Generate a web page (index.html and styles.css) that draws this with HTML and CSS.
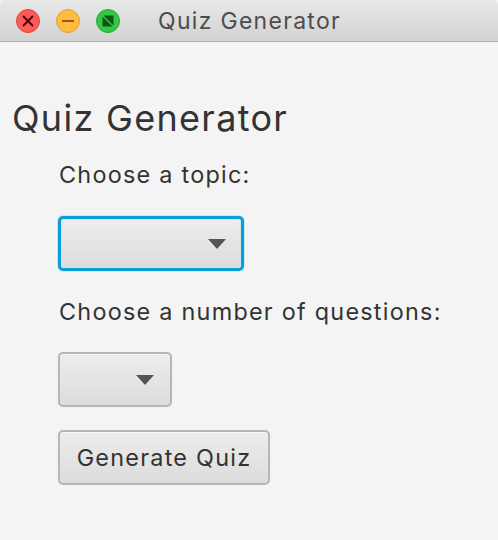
FILE: index.html
```html
<!DOCTYPE html>
<html>
<head>
<meta charset="utf-8">
<link rel="stylesheet" href="styles.css">
</head>
<body>
<div class="window">
  <div class="titlebar">
    <div class="lights">
      <svg class="light" viewBox="0 0 24 24"><circle cx="12" cy="12" r="11.5" fill="#fc5b57" stroke="#e0443e"/><path d="M7.5 7.5 L16.5 16.5 M16.5 7.5 L7.5 16.5" stroke="#4c0002" stroke-width="1.8" stroke-linecap="round"/></svg>
      <svg class="light" viewBox="0 0 24 24"><circle cx="12" cy="12" r="11.5" fill="#fdbb3f" stroke="#dea236"/><path d="M6 12 H18" stroke="#985712" stroke-width="2"/></svg>
      <svg class="light" viewBox="0 0 24 24"><circle cx="12" cy="12" r="11.5" fill="#33c748" stroke="#27a83b"/><path d="M7.5 6.5 H17.5 V16.5 Z" fill="#0b5a10"/><path d="M6.5 7.5 V17.5 H16.5 Z" fill="#0b5a10"/></svg>
    </div>
    <div class="title">Quiz Generator</div>
  </div>
  <div class="content">
    <h1 class="heading">Quiz Generator</h1>
    <div class="form">
      <div class="label label-first">Choose a topic:</div>
      <div class="combo combo-wide focused"><span class="arrow"></span></div>
      <div class="label label-second">Choose a number of questions:</div>
      <div class="combo combo-narrow"><span class="arrow"></span></div>
      <div class="button">Generate Quiz</div>
    </div>
  </div>
</div>
</body>
</html>
```
FILE: styles.css
```css
html, body {
  margin: 0;
  padding: 0;
  background: #f4f4f4;
}
body {
  font-family: Inter, "Noto Sans", "Liberation Sans", sans-serif;
  color: #333333;
}
.window {
  width: 498px;
  height: 540px;
  background: #f4f4f4;
  border-radius: 5px 5px 0 0;
  overflow: hidden;
}
.titlebar {
  height: 41px;
  border-bottom: 1px solid #afafaf;
  background: linear-gradient(#e8e8e8, #d2d2d2);
  display: flex;
  align-items: center;
}
.lights {
  display: flex;
  gap: 16px;
  padding-left: 16px;
}
.light {
  width: 24px;
  height: 24px;
  display: block;
}
.title {
  margin-left: 38px;
  font-size: 23px;
  letter-spacing: 1.3px;
  color: #4d4d4d;
  line-height: 26px;
}
.content {
  padding-left: 12px;
}
.heading {
  margin: 57px 0 0 0;
  font-size: 36px;
  letter-spacing: 1.3px;
  font-weight: 400;
  line-height: 38px;
  color: #333333;
}
.form {
  padding-left: 47px;
  display: flex;
  flex-direction: column;
  align-items: flex-start;
}
.label {
  font-size: 23.4px;
  letter-spacing: 1.25px;
  line-height: 26px;
  color: #333333;
}
.label-first { margin-top: 25px; }
.label-second { margin-top: 28px; }
.combo {
  position: relative;
  box-sizing: border-box;
  height: 55px;
  border: 2px solid #b6b6b6;
  border-radius: 5px;
  background: linear-gradient(#ededed, #dcdcdc);
  box-shadow: inset 0 1px 0 #f7f7f7;
}
.combo-wide {
  width: 186px;
  margin-top: 28px;
  margin-left: -1px;
}
.combo-narrow {
  width: 114px;
  margin-top: 27px;
  margin-left: -1px;
}
.focused {
  border: 3px solid #0a9ed9;
  box-shadow: 0 0 0 1px #cfe7f2, inset 0 0 0 1px #d2e6ee;
}
.arrow {
  position: absolute;
  right: 16px;
  top: 50%;
  margin-top: -5px;
  width: 0;
  height: 0;
  border-left: 9px solid transparent;
  border-right: 9px solid transparent;
  border-top: 10px solid #555555;
}
.focused .arrow { right: 15px; }
.button {
  box-sizing: border-box;
  margin-top: 23px;
  margin-left: -1px;
  width: 212px;
  height: 55px;
  border: 2px solid #b6b6b6;
  border-radius: 5px;
  background: linear-gradient(#ededed, #dcdcdc);
  box-shadow: inset 0 1px 0 #f7f7f7;
  font-size: 23.4px;
  letter-spacing: 1.25px;
  line-height: 51px;
  text-align: center;
  color: #333333;
}
```
